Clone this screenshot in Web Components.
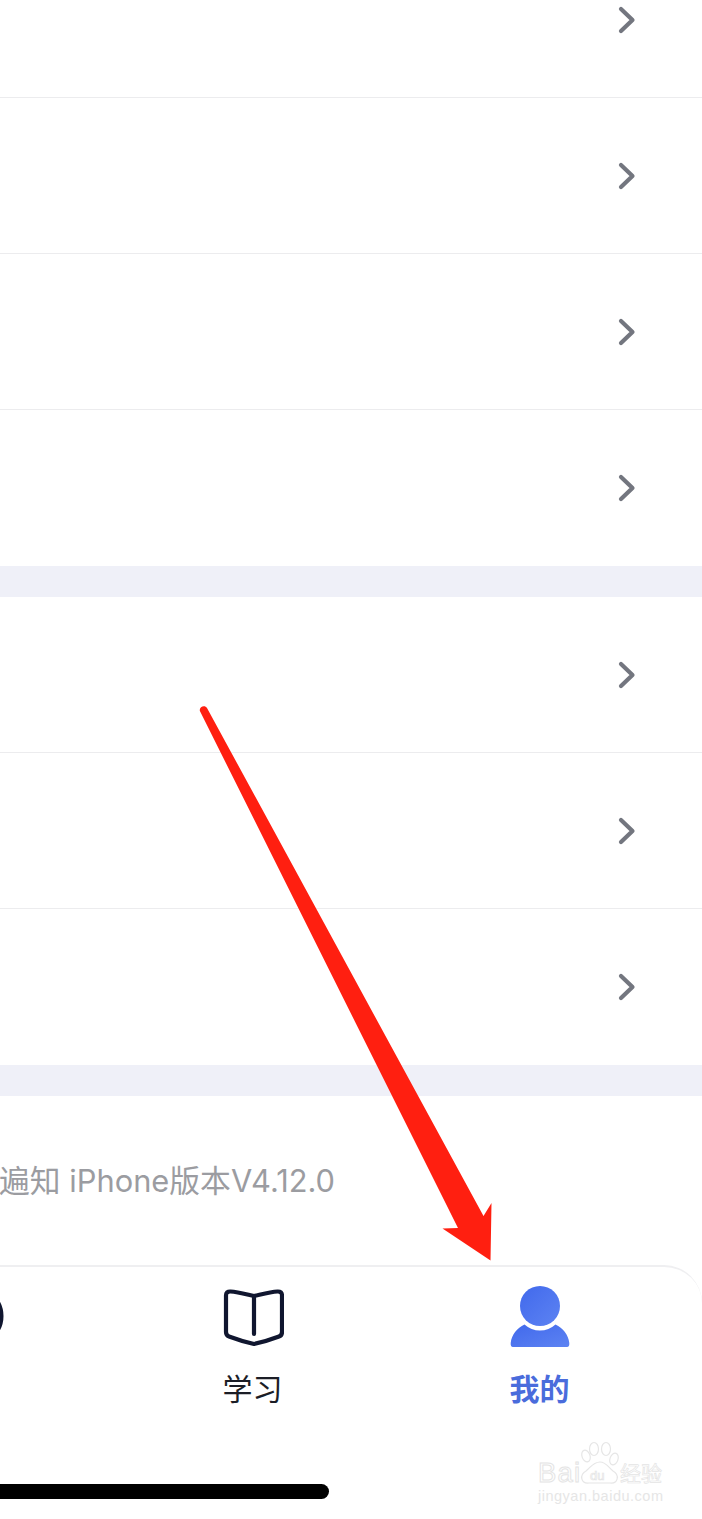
<!DOCTYPE html>
<html lang="zh">
<head>
<meta charset="utf-8">
<title>我的</title>
<style>
html,body{margin:0;padding:0;background:#fff}
body{width:702px;height:1519px;overflow:hidden;position:relative;font-family:"Inter","Noto Sans CJK SC",sans-serif}
</style>
</head>
<body>
<app-page>
  <menu-group>
    <menu-row></menu-row><menu-row></menu-row><menu-row></menu-row><menu-row last></menu-row>
  </menu-group>
  <section-gap></section-gap>
  <menu-group>
    <menu-row></menu-row><menu-row></menu-row><menu-row last></menu-row>
  </menu-group>
  <section-gap></section-gap>
  <version-note>遍知 iPhone版本V4.12.0</version-note>
  <tab-bar>
    <tab-item><svg slot="icon" width="60" height="62" viewBox="0 0 60 62" style="overflow:visible"><circle cx="37" cy="30" r="28" fill="none" stroke="#10162f" stroke-width="5"/></svg></tab-item>
    <tab-item label="学习"><svg slot="icon" width="62" height="62" viewBox="0 0 62 62"><path d="M32 48 L32 10 M32 10 C25 8.500 16 6 8.500 5.500 C5.500 5.300 4 6.800 4 9.500 L4 46 C4 48.500 5 49.800 7 50.500 C15 53.500 25 56.500 32 58 C39 56.500 49 53.500 57 50.500 C59 49.800 60 48.500 60 46 L60 9.500 C60 6.800 58.500 5.300 55.500 5.500 C48 6 39 8.500 32 10 Z" fill="none" stroke="#10162f" stroke-width="4.200" stroke-linecap="round" stroke-linejoin="round"/></svg></tab-item>
    <tab-item label="我的" active><svg slot="icon" width="60" height="62" viewBox="0 0 60 62"><defs><linearGradient id="pg" x1="0" y1="0" x2="1" y2="1"><stop offset="0" stop-color="#4169ec"/><stop offset="1" stop-color="#5d83f2"/></linearGradient></defs><circle cx="30" cy="20" r="20" fill="url(#pg)"/><path d="M14.500 38.500 A23 23 0 0 0 45.500 38.500 C53 42 58.500 49 59.300 57 C59.500 59.800 58.800 61 57 61 L3 61 C1.200 61 0.500 59.800 0.700 57 C1.500 49 7 42 14.500 38.500 Z" fill="url(#pg)"/></svg></tab-item>
  </tab-bar>
</app-page>
<pointer-arrow></pointer-arrow>
<baidu-mark></baidu-mark>
<script>
const def=(name,html)=>{
  customElements.define(name,class extends HTMLElement{
    constructor(){super();this.attachShadow({mode:'open'}).innerHTML=html}
    connectedCallback(){
      const l=this.shadowRoot.querySelector('[data-label]');
      if(l) l.textContent=this.getAttribute('label')||'';
    }
  });
};
def('app-page',`<style>:host{display:flex;flex-direction:column;margin-top:-58px}</style><slot></slot>`);
def('menu-group',`<style>:host{display:flex;flex-direction:column;background:#fff}</style><slot></slot>`);
def('menu-row',`<style>
:host{display:flex;align-items:center;justify-content:flex-end;box-sizing:border-box;height:156px;padding:0 65px 0 0;border-bottom:1px solid #ececee}
:host([last]){border-bottom:0}
svg{display:block}
</style><svg width="20" height="30" viewBox="0 0 20 30"><path d="M4 4 L15.500 15 L4 26" fill="none" stroke="#73767f" stroke-width="4.200" stroke-linecap="round" stroke-linejoin="round"/></svg>`);
def('section-gap',`<style>:host{display:block;height:31px;background:#eff0f8}</style>`);
def('version-note',`<style>
:host{display:flex;justify-content:flex-end;align-items:center;box-sizing:border-box;width:335px;height:169px;
white-space:nowrap;font-size:30.800px;line-height:169px;color:#9b9ca1;font-family:"Inter","Noto Sans CJK SC",sans-serif}
span{flex:none}
</style><span><slot></slot></span>`);
def('tab-bar',`<style>
:host{display:grid;grid-template-columns:repeat(3,287px);height:254px;box-sizing:border-box;width:calc(100% + 178px);margin-left:-178px;
background:#fff;border-top:2px solid #efeff1;border-top-right-radius:38px;padding-top:19px;position:relative}
.ind{position:absolute;left:0;width:507px;top:217px;height:15px;border-radius:8px;background:#000}
</style><slot></slot><div class="ind"></div>`);
def('tab-item',`<style>
:host{display:flex;flex-direction:column;align-items:center;font-size:30px;line-height:40px;color:#1b1d26;font-family:"Noto Sans CJK SC",sans-serif}
:host([active]){color:#4a6cdc;font-weight:700}
.ic{height:62px;display:flex;align-items:flex-start}
.lb{margin-top:19px}
</style><div class="ic"><slot name="icon"></slot></div><div class="lb" data-label></div>`);
def('pointer-arrow',`<style>:host{position:absolute;left:0;top:0;width:702px;height:1519px;pointer-events:none}svg{display:block}</style>
<svg width="702" height="1519" viewBox="0 0 702 1519"><path d="M199.900 711 C198.800 706.500 205 704.500 207 708 L483.500 1216 L491.500 1203 L490.500 1260.500 L442.500 1228.500 L458 1228 Z" fill="#ff1f10"/></svg>`);
def('baidu-mark',`<style>:host{position:absolute;left:530px;top:1435px;width:140px;height:75px;pointer-events:none}svg{display:block}
text{font-family:"Liberation Sans",sans-serif}</style>
<svg width="140" height="75" viewBox="0 0 140 75">
<g fill="none" stroke="#e6e6e6" stroke-width="1.200">
<ellipse cx="56" cy="21" rx="4" ry="6" transform="rotate(-20 56 21)"/>
<ellipse cx="64" cy="14" rx="4.500" ry="6.500"/>
<ellipse cx="76" cy="14" rx="4.500" ry="6.500"/>
<ellipse cx="84" cy="24" rx="4" ry="6" transform="rotate(20 84 24)"/>
<path d="M70 27 C63 27 60 33 56 36 C49 40 51 49 59 48 L80 48 C88 49 90 40 83 36 C79 33 76 27 70 27 Z"/>
</g>
<text x="8" y="47" font-size="27.500" fill="#fff" stroke="#e4e4e4" stroke-width="1" textLength="42">Bai</text>
<text x="60" y="45" font-size="13" fill="#fff" stroke="#e4e4e4" stroke-width="0.700">du</text>
<text x="90" y="45.500" font-size="21" fill="#fff" stroke="#e4e4e4" stroke-width="0.700" style="font-family:'Noto Sans CJK SC',sans-serif">经验</text>
<text x="8" y="66" font-size="14.500" fill="#e6e6e6" textLength="125">jingyan.baidu.com</text>
</svg>`);
</script>
</body>
</html>
